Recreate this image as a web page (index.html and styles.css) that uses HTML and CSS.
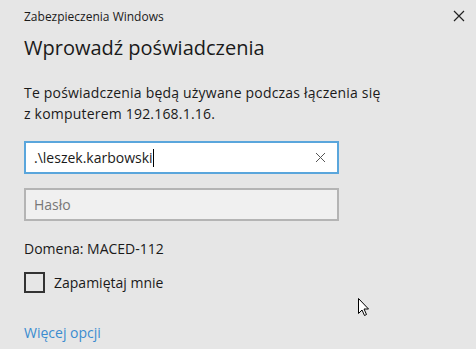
FILE: index.html
```html
<!DOCTYPE html>
<html lang="pl">
<head>
  <meta charset="UTF-8">
  <title>Zabezpieczenia Windows</title>
  <link rel="stylesheet" href="styles.css">
</head>
<body>
  <div class="dialog">
    <div class="titlebar">
      <span class="app">Zabezpieczenia Windows</span>
      <span class="close">
        <svg width="12" height="12" viewBox="0 0 12 12"><path d="M1 1L11 11M11 1L1 11" stroke="#222" stroke-width="1.2"/></svg>
      </span>
    </div>

    <h1>Wprowadź poświadczenia</h1>

    <p class="info">Te poświadczenia będą używane podczas łączenia się<br>z komputerem 192.168.1.16.</p>

    <div class="field active">
      <span class="value">.\leszek.karbowski</span><span class="caret"></span>
      <span class="clear">
        <svg width="11" height="11" viewBox="0 0 11 11"><path d="M1 1L10 10M10 1L1 10" stroke="#555" stroke-width="1"/></svg>
      </span>
    </div>

    <div class="field disabled">
      <span class="placeholder">Hasło</span>
    </div>

    <p class="domain">Domena: MACED-112</p>

    <label class="remember"><span class="box"></span>Zapamiętaj mnie</label>

    <a class="more" href="#">Więcej opcji</a>

    <svg class="pointer" width="12" height="19" viewBox="0 0 12 19">
      <path d="M0.5 0.5V15.5L4 12L6.5 17.5L8.5 16.5L6 11H10.5Z" fill="#fff" stroke="#000" stroke-width="1"/>
    </svg>
  </div>
</body>
</html>
```

FILE: styles.css
```css
html, body {
  margin: 0;
  background: #e6e6e6;
}
body {
  font-family: "Open Sans", "Noto Sans", sans-serif;
  color: #1a1a1a;
}
.dialog {
  position: relative;
  width: 476px;
  height: 349px;
  padding: 0 24px;
  box-sizing: border-box;
}
.titlebar {
  display: flex;
  justify-content: space-between;
  align-items: center;
  height: 32px;
  font-size: 12px;
}
.close {
  display: flex;
  margin-right: -13px;
}
h1 {
  margin: 2px 0 0;
  font-weight: normal;
  font-size: 20px;
  line-height: 28px;
}
.info {
  margin: 20px 0 0;
  font-size: 14px;
  line-height: 21px;
  letter-spacing: 0.2px;
}
.field {
  width: 315px;
  height: 33px;
  box-sizing: border-box;
  display: flex;
  align-items: center;
  padding: 0 8px;
  font-size: 14px;
}
.field.active {
  margin-top: 17px;
  background: #fff;
  border: 2px solid #5aa6dc;
}
.field.disabled {
  margin-top: 14px;
  background: #f0f0f0;
  border: 2px solid #b4b4b4;
}
.caret {
  width: 1px;
  height: 18px;
  background: #000;
}
.clear {
  display: flex;
  margin-left: auto;
  margin-right: 3px;
}
.placeholder {
  color: #777;
}
.domain {
  margin: 18px 0 0;
  font-size: 14px;
  line-height: 20px;
}
.remember {
  display: flex;
  align-items: center;
  gap: 9px;
  margin-top: 13px;
  font-size: 14px;
}
.box {
  width: 17px;
  height: 17px;
  border: 2px solid #333;
}
.more {
  display: block;
  margin-top: 30px;
  font-size: 14px;
  color: #3a8cd0;
  text-decoration: none;
}
.pointer {
  position: absolute;
  left: 358px;
  top: 298px;
}
```
